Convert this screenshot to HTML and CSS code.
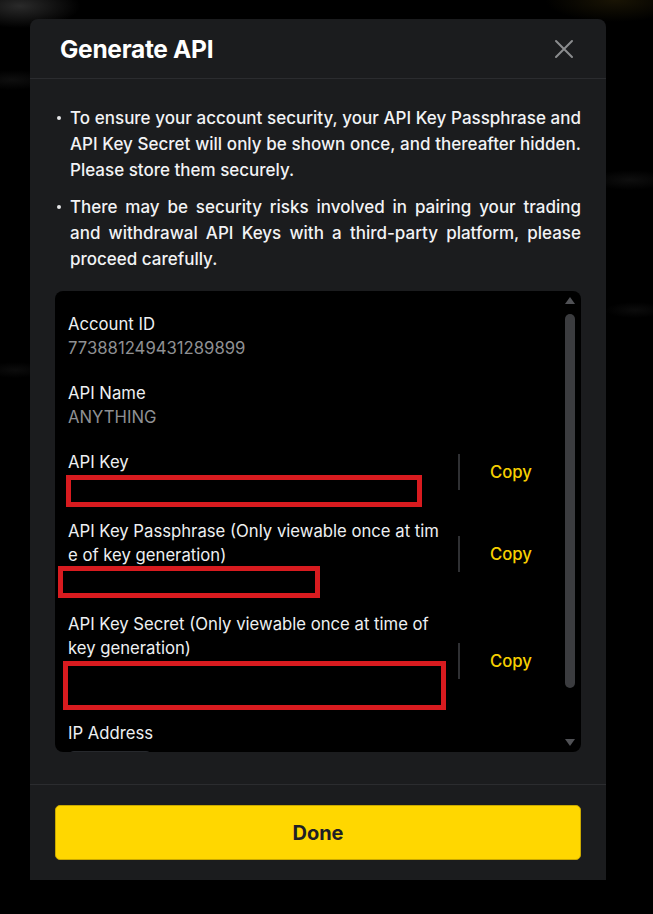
FILE: index.html
```html
<!DOCTYPE html>
<html lang="en">
<head>
<meta charset="utf-8">
<title>Generate API</title>
<link rel="stylesheet" href="styles.css">
</head>
<body>
<div class="modal">
  <div class="modal-header">
    <h1 class="modal-title">Generate API</h1>
    <button class="close-btn" aria-label="Close">
      <svg width="20" height="20" viewBox="0 0 20 20"><path d="M2 2 L18 18 M18 2 L2 18" stroke="#8b8c8e" stroke-width="2" stroke-linecap="round" fill="none"/></svg>
    </button>
  </div>
  <div class="modal-body">
    <ul class="notes">
      <li>To ensure your account security, your API Key Passphrase and API Key Secret will only be shown once, and thereafter hidden. Please store them securely.</li>
      <li>There may be security risks involved in pairing your trading and withdrawal API Keys with a third-party platform, please proceed carefully.</li>
    </ul>
    <div class="details">
      <div class="details-content">
        <div class="field">
          <div class="field-label">Account ID</div>
          <div class="field-value">773881249431289899</div>
        </div>
        <div class="field">
          <div class="field-label">API Name</div>
          <div class="field-value">ANYTHING</div>
        </div>
        <div class="field-row row-key">
          <div class="field-main">
            <div class="field-label">API Key</div>
            <div class="redact redact-key"></div>
          </div>
          <div class="copy-col">
            <span class="vsep"></span>
            <span class="copy">Copy</span>
          </div>
        </div>
        <div class="field-row row-pass">
          <div class="field-main">
            <div class="field-label">API Key Passphrase (Only viewable once at tim<br>e of key generation)</div>
            <div class="redact redact-pass"></div>
          </div>
          <div class="copy-col">
            <span class="vsep"></span>
            <span class="copy">Copy</span>
          </div>
        </div>
        <div class="field-row row-secret">
          <div class="field-main">
            <div class="field-label">API Key Secret (Only viewable once at time of<br>key generation)</div>
            <div class="redact redact-secret"></div>
          </div>
          <div class="copy-col">
            <span class="vsep"></span>
            <span class="copy">Copy</span>
          </div>
        </div>
        <div class="field">
          <div class="field-label">IP Address</div>
          <div class="ip-pill"></div>
        </div>
      </div>
      <div class="scrollbar">
        <span class="arrow-up"></span>
        <span class="thumb"></span>
        <span class="arrow-down"></span>
      </div>
    </div>
  </div>
  <div class="modal-footer">
    <button class="done-btn">Done</button>
  </div>
</div>
</body>
</html>
```
FILE: styles.css
```css
* { box-sizing: border-box; }
html, body { margin: 0; padding: 0; }
body {
  width: 653px;
  height: 914px;
  overflow: hidden;
  background-color: #000;
  background-image:
    radial-gradient(ellipse 60px 22px at 20px 6px, rgba(120,120,120,0.35), rgba(0,0,0,0) 100%),
    radial-gradient(ellipse 70px 22px at 615px 0px, rgba(90,72,15,0.28), rgba(0,0,0,0) 100%),
    radial-gradient(ellipse 40px 10px at 12px 80px, rgba(80,80,80,0.18), rgba(0,0,0,0) 100%),
    radial-gradient(ellipse 40px 10px at 630px 180px, rgba(80,80,80,0.18), rgba(0,0,0,0) 100%),
    radial-gradient(ellipse 30px 8px at 15px 370px, rgba(80,80,80,0.15), rgba(0,0,0,0) 100%),
    radial-gradient(ellipse 30px 8px at 635px 310px, rgba(80,80,80,0.15), rgba(0,0,0,0) 100%);
  font-family: Inter, "Noto Sans", sans-serif;
  color: #eaecef;
  padding: 19px 0 0 30px;
}
.modal {
  width: 576px;
  height: 861px;
  background: #1b1c1e;
  border-radius: 8px 8px 0 0;
  display: flex;
  flex-direction: column;
}
.modal-header {
  height: 60px;
  border-bottom: 1px solid #2b2c2f;
  display: flex;
  align-items: center;
  justify-content: space-between;
  padding: 0 32px 0 30px;
}
.modal-title {
  margin: 0;
  font-size: 24.5px;
  font-weight: 700;
  color: #fff;
  letter-spacing: -0.3px;
}
.close-btn {
  background: none;
  border: 0;
  padding: 0;
  width: 20px;
  height: 20px;
  display: flex;
}
.modal-body {
  padding: 26px 25px 32px 25px;
  border-bottom: 1px solid #2b2c2f;
}
.notes {
  list-style: none;
  margin: 0;
  padding: 0;
}
.notes li {
  position: relative;
  padding-left: 15px;
  font-size: 17px;
  line-height: 26px;
  font-weight: 500;
  text-align: justify;
  color: #f2f3f5;
}
.notes li + li { margin-top: 11px; }
.notes li::before {
  content: "";
  position: absolute;
  left: 2px;
  top: 11px;
  width: 4px;
  height: 4px;
  border-radius: 50%;
  background: #e5e6e8;
}
.details {
  margin-top: 19px;
  height: 461px;
  background: #000;
  border-radius: 8px;
  display: flex;
  overflow: hidden;
}
.details-content {
  flex: 1;
  padding: 21px 0 0 13px;
  overflow: hidden;
}
.field { margin-bottom: 21px; }
.field-label {
  font-size: 16.7px;
  line-height: 24px;
  color: #eef0f2;
  white-space: nowrap;
}
.field-value {
  font-size: 16.7px;
  line-height: 24px;
  color: #8f9093;
}
.field-row {
  display: flex;
  align-items: center;
}
.field-main { width: 390px; }
.copy-col {
  display: flex;
  align-items: center;
}
.vsep {
  display: block;
  width: 2px;
  height: 36px;
  background: #2f3033;
}
.copy {
  margin-left: 30px;
  font-size: 16.7px;
  font-weight: 500;
  color: #f7d000;
}
.redact {
  border: 5px solid #d81b1f;
  background: #000;
}
.row-key { margin-bottom: 12px; }
.row-key .copy-col { margin-top: -14px; }
.redact-key { width: 356px; height: 32px; margin: 1px 0 0 -2px; }
.row-pass { margin-bottom: 14px; }
.row-pass .copy-col { margin-top: -10px; }
.redact-pass { width: 262px; height: 32px; margin: -1px 0 0 -10px; }
.row-secret { margin-bottom: 11px; }
.redact-secret { width: 383px; height: 49px; margin: 1px 0 0 -5px; }
.ip-pill {
  margin-top: 6px;
  width: 84px;
  height: 24px;
  border-radius: 6px;
  background: #26282c;
}
.scrollbar {
  width: 16px;
  margin-right: 3px;
  display: flex;
  flex-direction: column;
  align-items: center;
  padding: 6px 0 6px;
}
.arrow-up {
  width: 0;
  height: 0;
  border-left: 5px solid transparent;
  border-right: 5px solid transparent;
  border-bottom: 7px solid #505155;
}
.thumb {
  margin-top: 10px;
  width: 10px;
  height: 374px;
  border-radius: 5px;
  background: #3b3c3f;
}
.arrow-down {
  margin-top: auto;
  width: 0;
  height: 0;
  border-left: 5px solid transparent;
  border-right: 5px solid transparent;
  border-top: 7px solid #505155;
}
.modal-footer {
  padding: 20px 25px;
}
.done-btn {
  display: block;
  width: 100%;
  height: 55px;
  border: 1px solid #c9a800;
  border-radius: 5px;
  background: #ffd700;
  font-family: Inter, "Noto Sans", sans-serif;
  font-size: 20px;
  font-weight: 700;
  color: #1e2026;
}
```
